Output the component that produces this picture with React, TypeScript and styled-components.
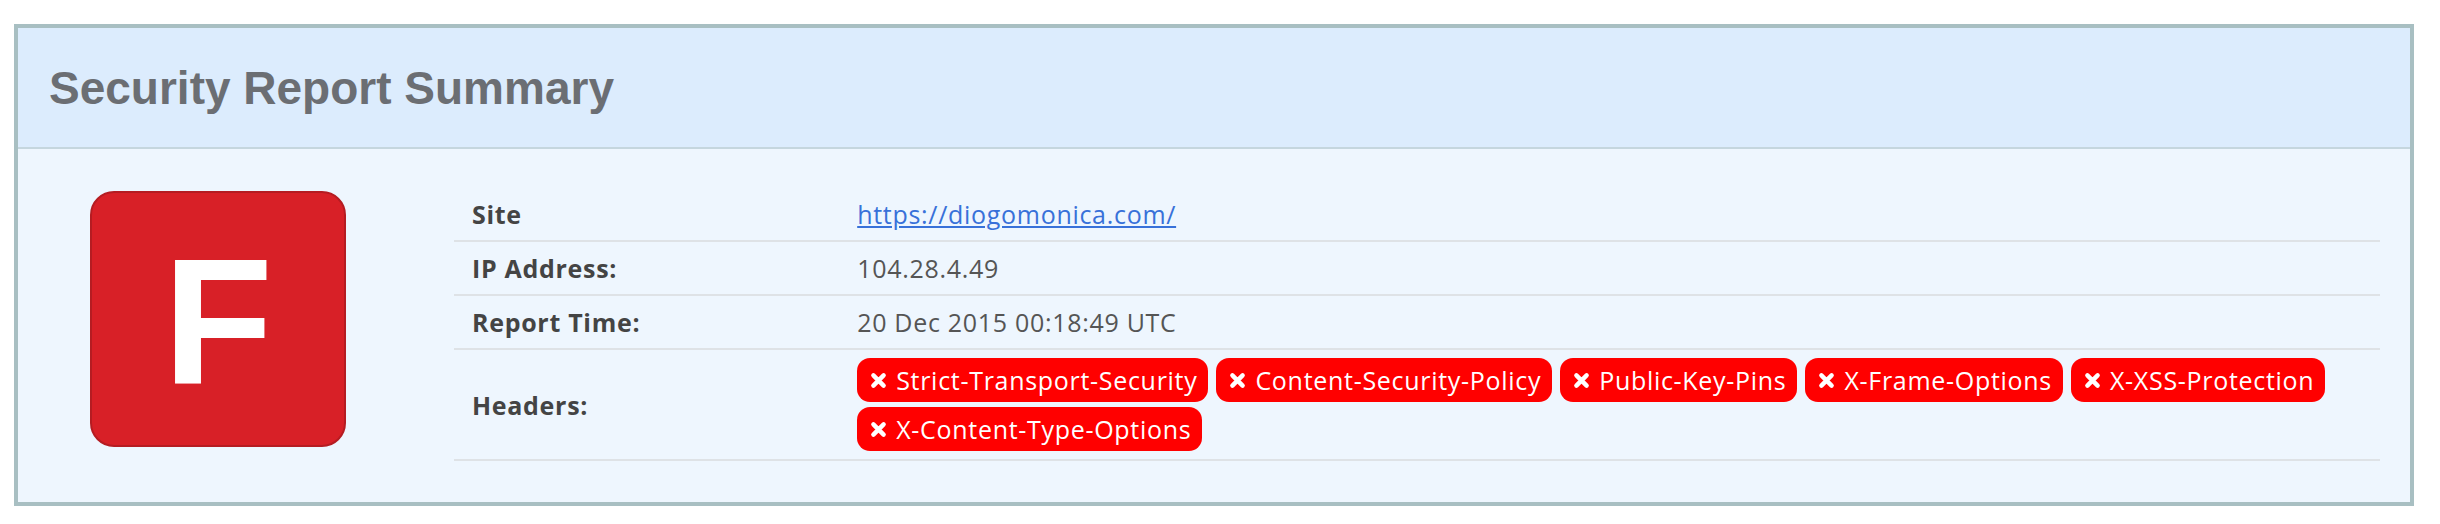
import React from "react";
import styled, { createGlobalStyle } from "styled-components";

const GlobalStyle = createGlobalStyle`
  html, body { margin: 0; padding: 0; background: #ffffff; }
  * { box-sizing: border-box; }
`;

const Panel = styled.section`
  margin: 24px 26px 16px 14px;
  border: 4px solid #a8bfc2;
`;

const PanelHeader = styled.header`
  background: #dcecfd;
  border-bottom: 2px solid #c5d6de;
  padding: 34px 30px 33px 31px;
`;

const Title = styled.h2`
  margin: 0;
  font-family: "Liberation Sans", Arial, sans-serif;
  font-weight: 700;
  font-size: 46px;
  line-height: 52px;
  color: #6b6e73;
`;

const PanelBody = styled.div`
  background: #eef6fe;
  display: flex;
  align-items: flex-start;
  padding: 39px 30px 41px 30px;
`;

const GradeCol = styled.div`
  flex: none;
  width: 406px;
  padding-left: 42px;
  padding-top: 3px;
`;

const GradeBadge = styled.div`
  width: 256px;
  height: 256px;
  background: #d82027;
  border: 2px solid #b51c22;
  border-radius: 24px;
  display: flex;
  align-items: center;
  justify-content: center;
  padding-top: 6px;
  font-family: "Liberation Sans", Arial, sans-serif;
  font-weight: 700;
  font-size: 180px;
  line-height: 1;
  color: #ffffff;
`;

const InfoTable = styled.table`
  flex: 1;
  border-collapse: collapse;
  font-family: "Open Sans", "Noto Sans", sans-serif;
  font-size: 25px;
  letter-spacing: 0.7px;
  line-height: 36px;
`;

const Label = styled.th`
  width: 20%;
  text-align: left;
  font-weight: 700;
  color: #444444;
  padding: 8px 18px;
  border-bottom: 2px solid #dee2e6;
  vertical-align: middle;
`;

const Value = styled.td<{ $tight?: boolean }>`
  color: #555555;
  padding: ${(p) => (p.$tight ? "8px 18px 8px" : "8px 18px")};
  border-bottom: 2px solid #dee2e6;
  vertical-align: middle;
`;

const SiteLink = styled.a`
  color: #3871d9;
  text-decoration: underline;
`;

const PillList = styled.div`
  display: flex;
  flex-wrap: wrap;
  gap: 5px 8px;
`;

const Pill = styled.span`
  display: inline-flex;
  align-items: center;
  gap: 9px;
  background: #ff0000;
  color: #ffffff;
  border-radius: 13px;
  padding: 4px 11px 4px 13px;
  line-height: 36px;
  white-space: nowrap;
`;

const CrossIcon = () => (
  <svg width="17" height="17" viewBox="0 0 16 16" aria-hidden="true">
    <path
      d="M3.2 3.2 L12.8 12.8 M12.8 3.2 L3.2 12.8"
      stroke="#ffffff"
      strokeWidth="4.2"
      strokeLinecap="round"
      fill="none"
    />
  </svg>
);

const missingHeaders = [
  "Strict-Transport-Security",
  "Content-Security-Policy",
  "Public-Key-Pins",
  "X-Frame-Options",
  "X-XSS-Protection",
  "X-Content-Type-Options",
];

export default function App() {
  return (
    <>
      <GlobalStyle />
      <Panel>
        <PanelHeader>
          <Title>Security Report Summary</Title>
        </PanelHeader>
        <PanelBody>
          <GradeCol>
            <GradeBadge>F</GradeBadge>
          </GradeCol>
          <InfoTable>
            <tbody>
              <tr>
                <Label>Site</Label>
                <Value>
                  <SiteLink href="https://diogomonica.com/">https://diogomonica.com/</SiteLink>
                </Value>
              </tr>
              <tr>
                <Label>IP Address:</Label>
                <Value>104.28.4.49</Value>
              </tr>
              <tr>
                <Label>Report Time:</Label>
                <Value>20 Dec 2015 00:18:49 UTC</Value>
              </tr>
              <tr>
                <Label>Headers:</Label>
                <Value $tight>
                  <PillList>
                    {missingHeaders.map((h) => (
                      <Pill key={h}>
                        <CrossIcon />
                        {h}
                      </Pill>
                    ))}
                  </PillList>
                </Value>
              </tr>
            </tbody>
          </InfoTable>
        </PanelBody>
      </Panel>
    </>
  );
}
